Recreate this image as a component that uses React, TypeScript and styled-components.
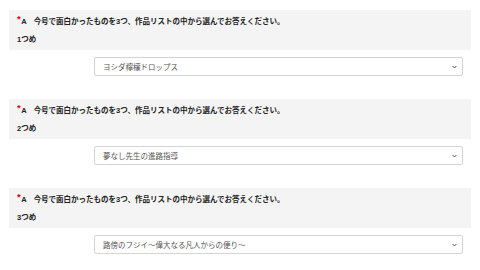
import React from "react";
import styled, { createGlobalStyle } from "styled-components";

const GlobalStyle = createGlobalStyle`
  html, body {
    margin: 0;
    padding: 0;
    background: #ffffff;
  }
  body {
    font-family: "Liberation Sans", "Noto Sans CJK JP", sans-serif;
    color: #333333;
  }
`;

const questions = [
  { label: "1つめ", value: "ヨシダ檸檬ドロップス" },
  { label: "2つめ", value: "夢なし先生の進路指導" },
  { label: "3つめ", value: "路傍のフジイ〜偉大なる凡人からの便り〜" },
];

const App = () => {
  return (
    <>
      <GlobalStyle />
      <Page>
        {questions.map((q) => (
          <Block key={q.label}>
            <QuestionBox>
              <Title>
                <Required>*</Required>
                <Mark>A</Mark>
                今号で面白かったものを3つ、作品リストの中から選んでお答えください。
              </Title>
              <Sub>{q.label}</Sub>
            </QuestionBox>
            <SelectRow>
              <SelectBox>
                <SelectText>{q.value}</SelectText>
                <Chevron viewBox="0 0 8 5" aria-hidden="true">
                  <path d="M1 1 L4 4 L7 1" fill="none" stroke="#444" strokeWidth="1.5" />
                </Chevron>
              </SelectBox>
            </SelectRow>
          </Block>
        ))}
      </Page>
    </>
  );
};

export default App;

const Page = styled.div`
  padding: 10px 9px 0 9px;
  width: 480px;
  box-sizing: border-box;
`;

const Block = styled.div`
  margin-bottom: 23px;
`;

const QuestionBox = styled.div`
  background: #f4f4f4;
  height: 40px;
  box-sizing: border-box;
  padding: 4px 8px;
`;

const Title = styled.div`
  font-size: 7.5px;
  font-weight: 700;
  line-height: 14px;
  white-space: nowrap;
  color: #222;
`;

const Required = styled.span`
  color: #e60012;
  font-size: 9.5px;
  font-weight: 700;
  position: relative;
  top: -2px;
  margin-right: 0.5px;
`;

const Mark = styled.span`
  margin-right: 7px;
`;

const Sub = styled.div`
  margin-top: 4px;
  font-size: 7.5px;
  font-weight: 700;
  line-height: 14px;
  color: #222;
`;

const SelectRow = styled.div`
  margin-top: 7px;
  padding: 0 8px 0 85px;
`;

const SelectBox = styled.div`
  position: relative;
  height: 19px;
  border: 1px solid #d4d4d4;
  border-radius: 2px;
  box-sizing: border-box;
  display: flex;
  align-items: center;
  padding: 0 18px 0 8px;
  background: #fff;
`;

const SelectText = styled.span`
  font-size: 7.5px;
  color: #555;
  white-space: nowrap;
`;

const Chevron = styled.svg`
  position: absolute;
  right: 5px;
  top: 7px;
  width: 5px;
  height: 4px;
`;
